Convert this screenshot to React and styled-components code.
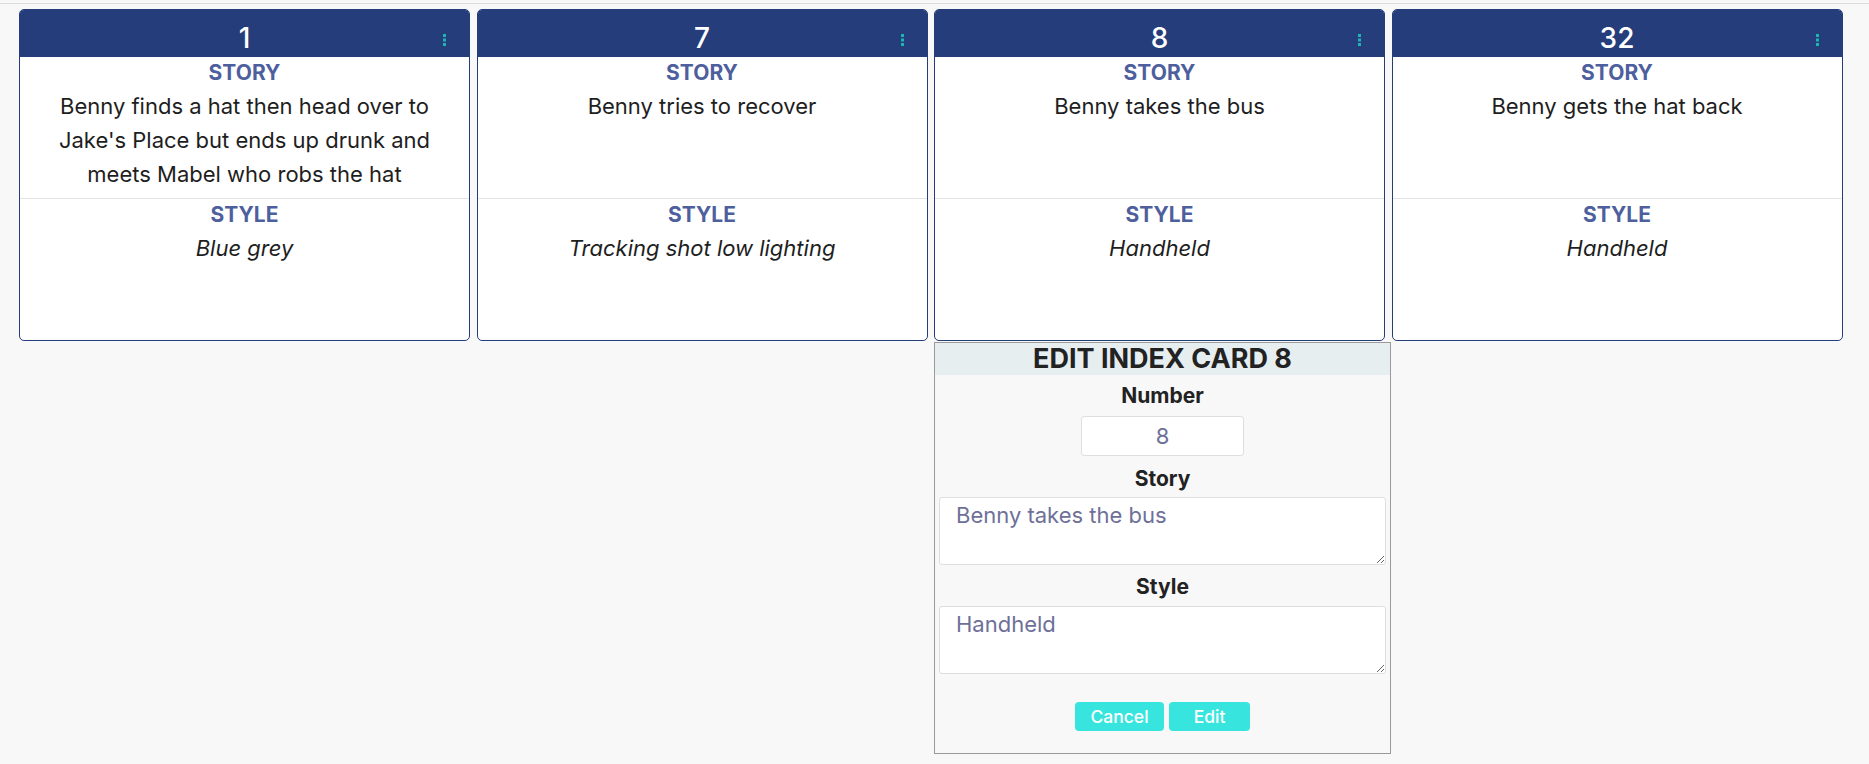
import React from "react";
import styled, { createGlobalStyle } from "styled-components";

const GlobalStyle = createGlobalStyle`
  body {
    margin: 0;
    background: #f8f8f8;
    font-family: Inter, "Noto Sans", "Liberation Sans", sans-serif;
    color: #1e1e1e;
  }
`;

const cards = [
  {
    number: 1,
    story: "Benny finds a hat then head over to Jake's Place but ends up drunk and meets Mabel who robs the hat",
    style: "Blue grey",
  },
  { number: 7, story: "Benny tries to recover", style: "Tracking shot low lighting" },
  { number: 8, story: "Benny takes the bus", style: "Handheld", editing: true },
  { number: 32, story: "Benny gets the hat back", style: "Handheld" },
];

const TopRule = styled.div`
  margin-top: 3px;
  height: 1px;
  background: #dcdcdc;
`;

const Board = styled.div`
  display: grid;
  grid-template-columns: repeat(4, 451px);
  column-gap: 6.5px;
  padding: 5px 0 0 19px;
  align-items: start;
`;

const Column = styled.div`
  display: flex;
  flex-direction: column;
  min-width: 0;
`;

const Card = styled.div`
  background: #fff;
  border: 1px solid #253d7a;
  border-radius: 5px;
  overflow: hidden;
`;

const CardHeader = styled.div`
  position: relative;
  height: 47px;
  box-sizing: border-box;
  padding-top: 9px;
  background: #253d7a;
  color: #fff;
  text-align: center;
  font-size: 28px;
  font-weight: 500;
  line-height: 38px;
`;

const Kebab = styled.svg`
  position: absolute;
  right: 23px;
  top: 24px;
`;

const Section = styled.div`
  height: ${(p) => p.$height}px;
  box-sizing: border-box;
  padding-top: 2px;
  text-align: center;
  border-bottom: ${(p) => (p.$divider ? "1px solid #e4e4e4" : "none")};
`;

const Label = styled.div`
  font-size: 21px;
  line-height: 28px;
  font-weight: 700;
  color: #4e5f9e;
  margin-bottom: 2px;
`;

const Body = styled.div`
  font-size: 22px;
  line-height: 34px;
  padding: 0 20px;
  font-style: ${(p) => (p.$italic ? "italic" : "normal")};
`;

const EditForm = styled.div`
  width: 457px;
  box-sizing: border-box;
  margin-top: 1px;
  border: 1px solid #9a9a9a;
  background: #f8f8f8;
  display: flex;
  flex-direction: column;
  align-items: center;
  padding-bottom: 22px;
`;

const FormTitle = styled.div`
  align-self: stretch;
  height: 32px;
  background: #e7eef0;
  text-align: center;
  font-size: 27px;
  line-height: 32px;
  font-weight: 700;
  color: #222;
`;

const FieldLabel = styled.div`
  font-size: 21px;
  line-height: 24px;
  font-weight: 700;
  color: #222;
  margin: ${(p) => p.$margin};
`;

const NumberInput = styled.input`
  width: 163px;
  height: 40px;
  box-sizing: border-box;
  border: 1px solid #dedede;
  border-radius: 3px;
  background: #fff;
  text-align: center;
  font-family: inherit;
  font-size: 22px;
  color: #6e7099;
  outline: none;
`;

const TextArea = styled.textarea`
  align-self: stretch;
  margin: 0 4px;
  height: 68px;
  box-sizing: border-box;
  padding: 5px 16px;
  border: 1px solid #dedede;
  border-radius: 3px;
  background: #fff;
  font-family: inherit;
  font-size: 22px;
  line-height: 24px;
  color: #6e7099;
  outline: none;
`;

const ButtonRow = styled.div`
  display: flex;
  gap: 5px;
  margin-top: 28px;
`;

const Button = styled.button`
  width: ${(p) => p.$w}px;
  height: 29px;
  border: none;
  border-radius: 4px;
  background: #38e5de;
  color: #fff;
  font-family: inherit;
  font-size: 17.5px;
  font-weight: 500;
  padding: 0;
  cursor: pointer;
`;

const KebabIcon = () => (
  <Kebab width="3" height="12" viewBox="0 0 3 12">
    <rect x="0" y="0" width="3" height="3" fill="#1fb4b2" />
    <rect x="0" y="4.5" width="3" height="3" fill="#1fb4b2" />
    <rect x="0" y="9" width="3" height="3" fill="#1fb4b2" />
  </Kebab>
);

const IndexCard = ({ card }) => (
  <Card>
    <CardHeader>
      {card.number}
      <KebabIcon />
    </CardHeader>
    <Section $divider $height={142}>
      <Label>STORY</Label>
      <Body>{card.story}</Body>
    </Section>
    <Section $height={141}>
      <Label>STYLE</Label>
      <Body $italic>{card.style}</Body>
    </Section>
  </Card>
);

const EditIndexCard = ({ card }) => (
  <EditForm>
    <FormTitle>EDIT INDEX CARD {card.number}</FormTitle>
    <FieldLabel $margin="9px 0 8px">Number</FieldLabel>
    <NumberInput type="text" defaultValue={card.number} />
    <FieldLabel $margin="11px 0 6px">Story</FieldLabel>
    <TextArea defaultValue={card.story} />
    <FieldLabel $margin="10px 0 7px">Style</FieldLabel>
    <TextArea defaultValue={card.style} />
    <ButtonRow>
      <Button $w={89}>Cancel</Button>
      <Button $w={81}>Edit</Button>
    </ButtonRow>
  </EditForm>
);

export default function App() {
  return (
    <>
      <GlobalStyle />
      <TopRule />
      <Board>
        {cards.map((card) => (
          <Column key={card.number}>
            <IndexCard card={card} />
            {card.editing && <EditIndexCard card={card} />}
          </Column>
        ))}
      </Board>
    </>
  );
}
